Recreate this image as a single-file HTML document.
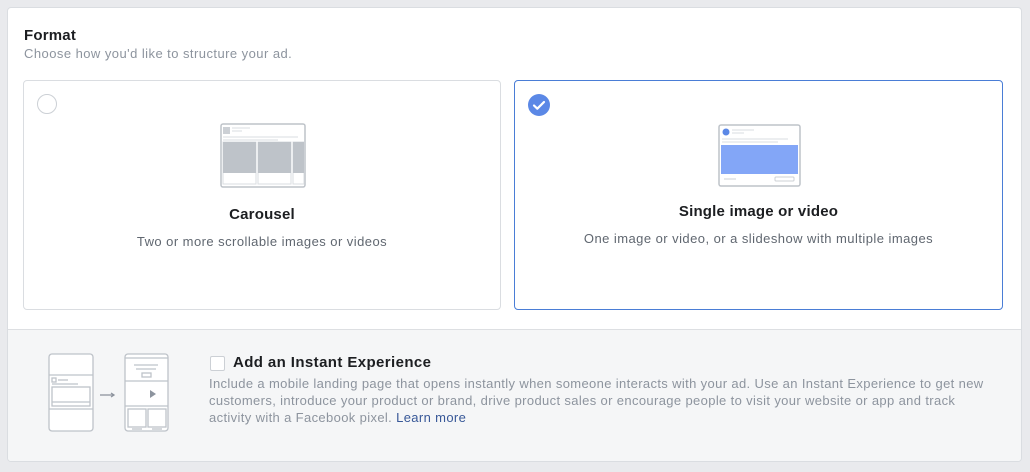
<!DOCTYPE html>
<html><head><style>
body{margin:0;width:1030px;height:472px;background:#e9eaed;font-family:"Liberation Sans",Helvetica,sans-serif;position:relative;overflow:hidden}
.card{position:absolute;left:7px;top:7px;width:1013px;height:453px;background:#fff;border:1px solid #dadde1;border-radius:4px;overflow:hidden}
.t{position:absolute;left:16px;top:19px;font-size:15px;font-weight:bold;color:#1c1e21;letter-spacing:0.2px}
.s{position:absolute;left:16px;top:38px;font-size:13px;color:#8d949e;letter-spacing:0.45px}
.opt{position:absolute;top:72px;height:228px;border:1px solid #dadde1;border-radius:4px;background:#fff;text-align:center}
.opt h3{margin:0;font-size:15px;font-weight:bold;color:#1c1e21;position:absolute;left:0;right:0;letter-spacing:0.2px}
.opt p{margin:0;font-size:13px;color:#606770;position:absolute;left:0;right:0;letter-spacing:0.45px}
.bot{position:absolute;left:0;top:321px;width:1013px;height:132px;background:#f5f6f7;border-top:1px solid #dddfe2}
</style></head><body>
<div class="card">
<div class="t">Format</div>
<div class="s">Choose how you'd like to structure your ad.</div>
<div class="opt" style="left:15px;width:476px">
 <div style="position:absolute;left:13px;top:13px;width:18px;height:18px;border:1px solid #ccd0d5;border-radius:50%"></div>
 <svg style="position:absolute;left:196px;top:42px" width="86" height="65" viewBox="0 0 86 65">
  <rect x="1" y="1" width="84" height="63" rx="2" fill="#fff" stroke="#bec3c9" stroke-width="1.5"/>
  <rect x="3" y="4" width="7" height="7" fill="#ccd0d5"/>
  <line x1="12" y1="5" x2="30" y2="5" stroke="#dadde1"/><line x1="12" y1="8" x2="22" y2="8" stroke="#dadde1"/>
  <line x1="3" y1="14" x2="78" y2="14" stroke="#dadde1"/><line x1="3" y1="17" x2="58" y2="17" stroke="#dadde1"/>
  <rect x="3" y="19" width="33" height="42" fill="#fff" stroke="#dadde1"/><rect x="3" y="19" width="33" height="31" fill="#bec3c9"/>
  <rect x="38" y="19" width="33" height="42" fill="#fff" stroke="#dadde1"/><rect x="38" y="19" width="33" height="31" fill="#bec3c9"/>
  <rect x="73" y="19" width="11" height="42" fill="#fff" stroke="#dadde1"/><rect x="73" y="19" width="11" height="31" fill="#bec3c9"/>
 </svg>
 <h3 style="top:125px">Carousel</h3>
 <p style="top:153px">Two or more scrollable images or videos</p>
</div>
<div class="opt" style="left:506px;width:487px;border-color:#4a7dd6">
 <svg style="position:absolute;left:13px;top:13px" width="22" height="22" viewBox="0 0 22 22"><circle cx="11" cy="11" r="11" fill="#5b88e6"/><path d="M6 11.5l3.3 3.2L16 8" fill="none" stroke="#fff" stroke-width="2.2" stroke-linecap="round" stroke-linejoin="round"/></svg>
 <svg style="position:absolute;left:203px;top:43px" width="83" height="63" viewBox="0 0 83 63">
  <rect x="1" y="1" width="81" height="61" rx="2" fill="#fff" stroke="#bec3c9" stroke-width="1.5"/>
  <circle cx="8" cy="8" r="3.5" fill="#5b88e6"/>
  <line x1="14" y1="6" x2="36" y2="6" stroke="#dadde1"/><line x1="14" y1="9" x2="26" y2="9" stroke="#dadde1"/>
  <line x1="4" y1="15" x2="70" y2="15" stroke="#dadde1"/><line x1="4" y1="18" x2="60" y2="18" stroke="#dadde1"/>
  <rect x="3" y="21" width="77" height="29" fill="#83a6f7"/>
  <line x1="6" y1="55" x2="18" y2="55" stroke="#ccd0d5"/>
  <rect x="57" y="53" width="19" height="4" rx="1" fill="none" stroke="#ccd0d5"/>
 </svg>
 <h3 style="top:122px">Single image or video</h3>
 <p style="top:150px">One image or video, or a slideshow with multiple images</p>
</div>
<div class="bot">
 <svg style="position:absolute;left:40px;top:23px" width="130" height="80" viewBox="0 0 130 80">
  <g fill="none" stroke="#bec3c9" stroke-width="1.3">
  <rect x="1" y="1" width="44" height="77" rx="3" fill="#fff"/>
  <line x1="1" y1="22" x2="45" y2="22"/><line x1="1" y1="56" x2="45" y2="56"/>
  <rect x="4" y="25" width="4" height="4"/><line x1="10" y1="27" x2="20" y2="27"/><line x1="4" y1="31" x2="30" y2="31"/>
  <rect x="4" y="34" width="38" height="19"/><line x1="4" y1="49" x2="42" y2="49"/>
  <line x1="52" y1="42" x2="66" y2="42" stroke="#8d949e"/><path d="M63 40l3 2-3 2" stroke="#8d949e"/>
  <rect x="77" y="1" width="43" height="77" rx="3" fill="#fff"/>
  <line x1="77" y1="5" x2="120" y2="5"/><line x1="77" y1="28" x2="120" y2="28"/><line x1="77" y1="53" x2="120" y2="53"/>
  <line x1="86" y1="12" x2="110" y2="12"/><line x1="88" y1="16" x2="108" y2="16"/><rect x="94" y="20" width="9" height="4"/>
  <rect x="80" y="56" width="18" height="18"/><rect x="100" y="56" width="18" height="18"/>
  <line x1="84" y1="76" x2="94" y2="76"/><line x1="104" y1="76" x2="114" y2="76"/>
  </g>
  <path d="M102 37l6 4-6 4z" fill="#8d949e"/>
 </svg>
 <div style="position:absolute;left:202px;top:26px;width:13px;height:13px;border:1px solid #ccd0d5;border-radius:2px;background:#fff"></div>
 <div style="position:absolute;left:225px;top:24px;font-size:15px;font-weight:bold;color:#1c1e21;letter-spacing:0.4px">Add an Instant Experience</div>
 <div style="position:absolute;left:201px;top:45px;width:775px;font-size:13px;line-height:17px;color:#8d949e;letter-spacing:0.36px">Include a mobile landing page that opens instantly when someone interacts with your ad. Use an Instant Experience to get new customers, introduce your product or brand, drive product sales or encourage people to visit your website or app and track activity with a Facebook pixel. <span style="color:#385898">Learn more</span></div>
</div>
</div>
</body></html>
